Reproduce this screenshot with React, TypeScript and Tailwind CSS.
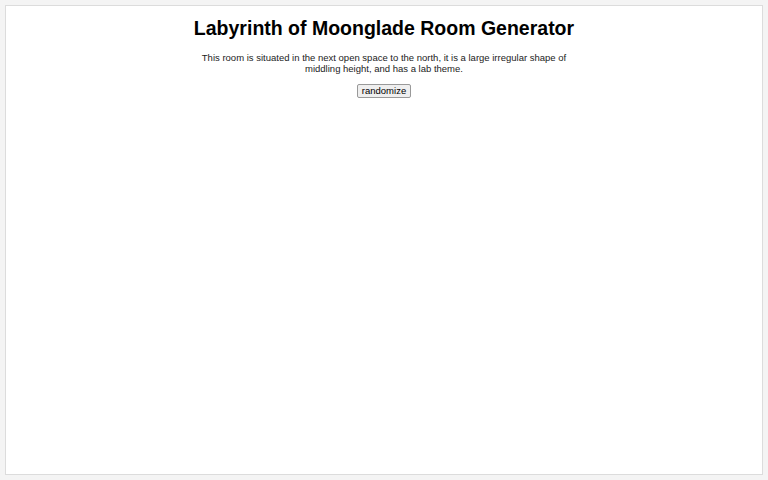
export default function App() {
  return (
    <div className="h-[480px] w-[768px] bg-[#f4f4f4] p-[5px] font-['Liberation_Sans',Arial,sans-serif] text-black">
      <div className="flex h-[470px] flex-col items-center border border-[#dcdcdc] bg-white">
        <h1 className="mt-[8px] text-[19.5px] font-bold leading-[28px]">Labyrinth of Moonglade Room Generator</h1>
        <p className="mt-[10px] w-[372px] text-center text-[9.5px] leading-[11px] text-[#222]">
          This room is situated in the next open space to the north, it is a large irregular shape of middling height, and has a lab theme.
        </p>
        <button
          type="button"
          className="mt-[10px] rounded-[2px] border border-[#999] bg-[#efefef] px-[4px] text-[9.5px] leading-[12px]"
        >
          randomize
        </button>
      </div>
    </div>
  );
}
